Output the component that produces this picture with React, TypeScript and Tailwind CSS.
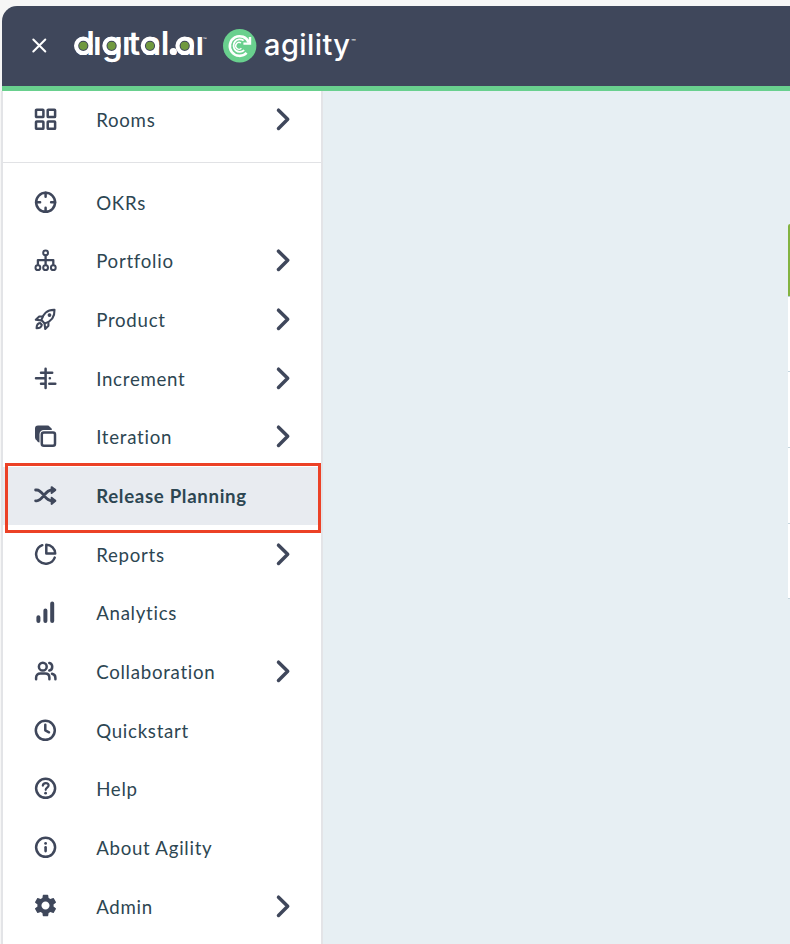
import type { ReactNode } from 'react';
import { MdSettings } from 'react-icons/md';

type Item = {
  label: string;
  icon: ReactNode;
  expandable?: boolean;
  active?: boolean;
};

function Icon({ children }: { children: ReactNode }) {
  return (
    <svg
      className="h-6 w-6 shrink-0"
      viewBox="-0.6 -0.3 24 24"
      fill="none"
      stroke="currentColor"
      strokeWidth="2.5"
      strokeLinecap="round"
      strokeLinejoin="round"
      aria-hidden="true"
    >
      {children}
    </svg>
  );
}

const roomsIcon = (
  <Icon>
    <rect x="2.4" y="2.4" width="7.4" height="7.4" rx="0.6" />
    <rect x="14.1" y="2.4" width="7.4" height="7.4" rx="0.6" />
    <rect x="2.4" y="14.1" width="7.4" height="7.4" rx="0.6" />
    <rect x="14.1" y="14.1" width="7.4" height="7.4" rx="0.6" />
  </Icon>
);

const items: Item[] = [
  {
    label: 'OKRs',
    icon: (
      <Icon>
        <circle cx="12" cy="12" r="9.5" />
        <path d="M12 2.5v4M12 17.5v4M2.5 12h4M17.5 12h4" />
      </Icon>
    ),
  },
  {
    label: 'Portfolio',
    expandable: true,
    icon: (
      <Icon>
        <g strokeWidth="2">
          <circle cx="12" cy="4.6" r="2.4" />
          <circle cx="4.3" cy="19.4" r="2.4" />
          <circle cx="12" cy="19.4" r="2.4" />
          <circle cx="19.7" cy="19.4" r="2.4" />
          <path d="M12 7v9.5M4.3 16.5v-4.7h15.4v4.7" strokeWidth="2.3" />
        </g>
      </Icon>
    ),
  },
  {
    label: 'Product',
    expandable: true,
    icon: (
      <Icon>
        <g strokeWidth="2.1">
          <path d="M7.8 12.8C9.2 7.4 13.3 2.3 20.9 2.6c.3 7.6-4.2 11.9-9.8 13.6z" />
          <path d="M9 9.2H5.6L2.2 12.4l5.2.7M14.8 15v3.4l-3.2 3.3-.6-5.2" />
          <path d="M6.5 15.7c-2.4.3-3.5 2-3.5 5.2 3 0 4.8-1 5.2-3.4z" />
          <circle cx="15.9" cy="7.8" r="1.3" fill="currentColor" strokeWidth="1.2" />
        </g>
      </Icon>
    ),
  },
  {
    label: 'Increment',
    expandable: true,
    icon: (
      <Icon>
        <path d="M12 2.4v19.2M7.4 6.4h11.2M2.4 12h9.6M16.2 12h.1M7.4 17.4H12M15.7 17.4h6" />
      </Icon>
    ),
  },
  {
    label: 'Iteration',
    expandable: true,
    icon: (
      <Icon>
        <path
          d="M4.4 1.3h9.4a3 3 0 0 1 2.5 1.3a3.2 3.2 0 0 1 2 3.2h-8.2a4.2 4.2 0 0 0-4.2 4.2v8.2a3.4 3.4 0 0 1-2.7-2a3.4 3.4 0 0 1-1.8-3V4.3a3 3 0 0 1 3-3z"
          fill="currentColor"
          stroke="none"
        />
        <rect x="8.2" y="8.2" width="13.2" height="13.2" rx="2" />
      </Icon>
    ),
  },
  {
    label: 'Release Planning',
    active: true,
    icon: (
      <Icon>
        <path
          d="M2 6.7h1.2C9.4 6.7 11 17.5 18.2 17.5h2.6M2 17.5h1.2C9.4 17.5 11 6.7 18.2 6.7h2.6"
          strokeWidth="2.8"
        />
        <path d="M18 3.8l3.8 2.9L18 9.8zM18 14.4l3.8 3.1-3.8 3.1z" fill="currentColor" strokeWidth="1.9" />
      </Icon>
    ),
  },
  {
    label: 'Reports',
    expandable: true,
    icon: (
      <Icon>
        <path d="M8.7 2.9a9.6 9.6 0 1 0 12.4 12.4" />
        <path d="M12.7 2.4v8.9h8.9a8.9 8.9 0 0 0-8.9-8.9z" />
      </Icon>
    ),
  },
  {
    label: 'Analytics',
    icon: (
      <Icon>
        <path d="M4.8 17v3.7M11.8 10.3v10.4M18.6 3.2v17.5" strokeWidth="4" />
      </Icon>
    ),
  },
  {
    label: 'Collaboration',
    expandable: true,
    icon: (
      <Icon>
        <circle cx="9.2" cy="7.4" r="3.9" />
        <path d="M2.5 20v-1.6c0-2.6 1.7-4.2 4.2-4.2h4.9c2.5 0 4.2 1.6 4.2 4.2V20M15.7 3.6c3.9.7 3.9 7 0 7.7M18.4 14.5c2.3.5 3.4 2 3.4 4.1V20" />
      </Icon>
    ),
  },
  {
    label: 'Quickstart',
    icon: (
      <Icon>
        <circle cx="11.7" cy="12" r="9.5" />
        <path d="M11.7 6.4V12l3.7 2" />
      </Icon>
    ),
  },
  {
    label: 'Help',
    icon: (
      <Icon>
        <circle cx="12" cy="12" r="9.5" />
        <path d="M9.2 9.4c.3-3.6 5.8-3.4 5.8-.2 0 2.1-2.9 2.3-2.9 4.3" strokeWidth="2.2" />
        <circle cx="12" cy="16.9" r="1.4" fill="currentColor" stroke="none" />
      </Icon>
    ),
  },
  {
    label: 'About Agility',
    icon: (
      <Icon>
        <circle cx="12" cy="12" r="9.5" />
        <path d="M12 12v3.8" strokeWidth="2.6" />
        <circle cx="12" cy="8.1" r="1.4" fill="currentColor" stroke="none" />
      </Icon>
    ),
  },
  {
    label: 'Admin',
    expandable: true,
    icon: <MdSettings className="-m-[1.5px] h-[27px] w-[27px]" />,
  },
];

function Chevron() {
  return (
    <svg
      className="h-6 w-4 shrink-0"
      viewBox="0 -0.3 16 24"
      fill="none"
      stroke="currentColor"
      strokeWidth="3.5"
      strokeLinecap="round"
      strokeLinejoin="round"
      aria-hidden="true"
    >
      <path d="M3.5 2.9l9.2 9.1-9.2 9.1" />
    </svg>
  );
}

function NavRow({ label, icon, expandable, active }: Item) {
  return (
    <a
      className={
        active
          ? 'relative flex h-[58.66px] items-center bg-[#e8ebf0] pr-[30px] pl-[30px] font-bold tracking-[0.67px]'
          : 'flex h-[58.66px] items-center pr-[30px] pl-[30px] tracking-[0.72px]'
      }
    >
      <span className="-mt-[2px] flex text-[#3f475b]">{icon}</span>
      <span className="ml-[39.2px] flex-1 whitespace-nowrap">{label}</span>
      {expandable && (
        <span className="-mt-[2px] flex text-[#3f475b]">
          <Chevron />
        </span>
      )}
      {active && <span className="absolute -top-1 left-0.5 h-[70px] w-[316px] border-[3px] border-[#ec4126]" />}
    </a>
  );
}

function DigitalLogo() {
  return (
    <svg className="h-12 w-[136px] shrink-0" viewBox="72 22 136 48" aria-label="digital.ai">
      <text
        x="74.2 93 102 122 128.5 142.2 160.8 168.5 176.9 195.5"
        y="55"
        className="fill-white font-['Inter',sans-serif] text-[33px] font-semibold"
      >
        dıgıtal.aı
      </text>
      {/* ring-shaped bowls with their green centres */}
      {[83.3, 111.6, 150, 184.7].map((cx) => (
        <g key={cx}>
          <circle cx={cx} cy="45.8" r="7.2" fill="#3f475b" stroke="#fff" strokeWidth="4.2" />
          <circle cx={cx} cy="45.8" r="4.1" fill="#70993f" />
        </g>
      ))}
      <circle cx="173.3" cy="51.5" r="3.6" fill="#fff" />
      <text x="203" y="40.5" className="fill-white font-['Lato',sans-serif] text-[5px]">
        ™
      </text>
    </svg>
  );
}

function AgilityLogo() {
  return (
    <svg className="h-12 w-[136px] shrink-0" viewBox="222 22 136 48" aria-label="agility">
      <circle cx="239.7" cy="45.8" r="16.7" fill="#69d08e" />
      <g fill="none" stroke="#fff">
        <path d="M248.8 42.6a9.8 9.8 0 1 0-2.2 10.3" strokeWidth="2.6" />
        <path d="M243.6 40.6a6.3 6.3 0 1 0 .6 9.6" strokeWidth="1.8" />
        <path d="M241 43a3.4 3.4 0 1 0 .4 5.3" strokeWidth="1.4" />
        <path d="M250 37v6.6h-6.6" strokeWidth="2.4" />
      </g>
      <text
        x="264"
        y="54.8"
        textLength="86"
        className="fill-white font-['Inter',sans-serif] text-[29px] font-medium"
      >
        agility
      </text>
      <text x="351" y="43" className="fill-white font-['Lato',sans-serif] text-[6px]">
        ™
      </text>
    </svg>
  );
}

export default function App() {
  return (
    <div className="h-[944px] w-[790px] overflow-hidden bg-[#f6f6f6] pt-1.5 font-['Lato',sans-serif] text-[18.67px] text-[#2d4652]">
      <header className="ml-0.5 flex h-[85px] items-center rounded-tl-[15px] border-b-[5px] border-[#69d08e] bg-[#3f475b]">
        <svg className="ml-[29px] h-4 w-4" viewBox="0 0 16 16" stroke="#fff" strokeWidth="2" strokeLinecap="round" aria-label="Close">
          <path d="M2.3 1.5l12 12M14.3 1.5l-12 12" />
        </svg>
        <div className="ml-[25px] flex">
          <DigitalLogo />
          <div className="ml-3.5">
            <AgilityLogo />
          </div>
        </div>
      </header>

      <div className="flex h-[853px]">
        <nav className="ml-px w-[322px] shrink-0 border-x-2 border-[#e3e4e7] bg-white">
          <div className="h-[72px] border-b border-[#e1e2e5]">
            <NavRow label="Rooms" icon={roomsIcon} expandable />
          </div>
          <div className="pt-[10.4px]">
            {items.map((item) => (
              <NavRow key={item.label} {...item} />
            ))}
          </div>
        </nav>

        <main className="flex flex-1 justify-end bg-[#e7eff3] pt-[133px]">
          <div className="h-[375px] w-0.5 overflow-hidden rounded-tl-sm bg-white">
            <div className="h-[73px] border-b border-[#b5d3d1] bg-[#83b341]" />
            <div className="h-[75px] border-b border-[#c5d5dd]" />
            <div className="h-[76px] border-b border-[#c5d5dd]" />
            <div className="h-[76px] border-b border-[#c5d5dd]" />
            <div className="h-[75px] border-b border-[#c5d5dd]" />
          </div>
        </main>
      </div>
    </div>
  );
}
